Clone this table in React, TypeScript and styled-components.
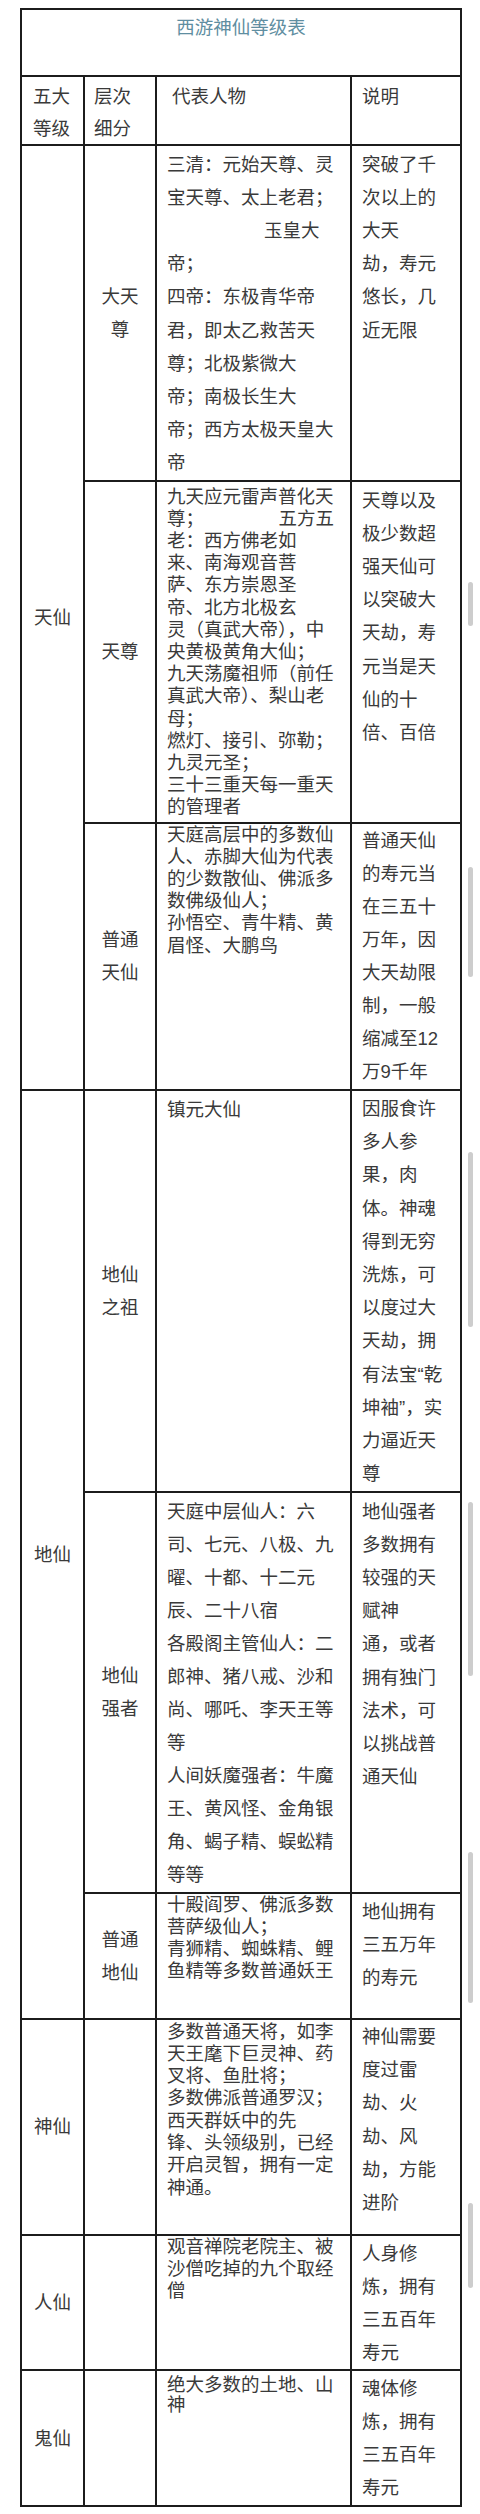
import React from "react";
import styled, { createGlobalStyle } from "styled-components";

const Global = createGlobalStyle`
  html, body { margin: 0; padding: 0; background: #ffffff; }
  body {
    font-family: "Liberation Sans", "Noto Sans CJK SC", sans-serif;
    color: #3a3a3a;
  }
`;

const Page = styled.div`
  position: relative;
  width: 480px;
  height: 2514px;
  padding-top: 8px;
  box-sizing: border-box;
  overflow: hidden;
`;

const Table = styled.table`
  margin-left: 20px;
  width: 440px;
  border-collapse: collapse;
  table-layout: fixed;
  font-size: 18.5px;
`;

const Row = styled.tr<{ $h: number }>`
  height: ${(p) => p.$h}px;
`;

const BaseCell = styled.td`
  border: 2px solid #1c1c1c;
  padding: 0;
  white-space: nowrap;
  vertical-align: top;
  overflow: hidden;
`;

const TitleCell = styled(BaseCell)`
  text-align: center;
  color: #5f8ea1;
  line-height: 33px;
  padding-top: 1px;
`;

const HeadCell = styled(BaseCell)<{ $pl: number }>`
  line-height: 31.5px;
  padding: 4px 0 0 ${(p) => p.$pl}px;
`;

const CenterCell = styled(BaseCell)`
  vertical-align: middle;
  text-align: center;
  line-height: 33px;
`;

const FigureCell = styled(BaseCell)<{ $lh: number; $pt: number }>`
  padding: ${(p) => p.$pt}px 16px 0 10px;
  line-height: ${(p) => p.$lh}px;
`;

const NoteCell = styled(BaseCell)<{ $lh: number; $pt: number }>`
  padding: ${(p) => p.$pt}px 0 0 10px;
  line-height: ${(p) => p.$lh}px;
`;

const Line = styled.div<{ $indent?: number }>`
  padding-left: ${(p) => p.$indent ?? 0}px;
`;

const SplitLine = styled.div`
  display: flex;
  justify-content: space-between;
`;

const Thumb = styled.div<{ $top: number; $h: number }>`
  position: absolute;
  left: 468px;
  width: 5px;
  border-radius: 3px;
  background: #cdcdcd;
  top: ${(p) => p.$top}px;
  height: ${(p) => p.$h}px;
`;

const BottomRule = styled.div`
  margin-top: 8px;
  height: 2px;
  background: #ababab;
`;

type Fig = string | { text: string; indent: number } | { left: string; right: string };

interface Tier {
  h: number;
  level: string[];
  figures: Fig[];
  figLh: number;
  figPt: number;
  notes: string[];
  noteLh: number;
  notePt: number;
}

interface Group {
  name: string;
  tiers: Tier[];
}

const groups: Group[] = [
  {
    name: "天仙",
    tiers: [
      {
        h: 335,
        level: ["大天", "尊"],
        figures: [
          "三清：元始天尊、灵",
          "宝天尊、太上老君；",
          { text: "玉皇大", indent: 97 },
          "帝；",
          "四帝：东极青华帝",
          "君，即太乙救苦天",
          "尊；北极紫微大",
          "帝；南极长生大",
          "帝；西方太极天皇大",
          "帝",
        ],
        figLh: 33.2,
        figPt: 1.5,
        notes: ["突破了千", "次以上的", "大天", "劫，寿元", "悠长，几", "近无限"],
        noteLh: 33.2,
        notePt: 1.5,
      },
      {
        h: 342,
        level: ["天尊"],
        figures: [
          "九天应元雷声普化天",
          { left: "尊；", right: "五方五" },
          "老：西方佛老如",
          "来、南海观音菩",
          "萨、东方崇恩圣",
          "帝、北方北极玄",
          "灵（真武大帝），中",
          "央黄极黄角大仙；",
          "九天荡魔祖师（前任",
          "真武大帝）、梨山老",
          "母；",
          "燃灯、接引、弥勒；",
          "九灵元圣；",
          "三十三重天每一重天",
          "的管理者",
        ],
        figLh: 22.2,
        figPt: 4,
        notes: ["天尊以及", "极少数超", "强天仙可", "以突破大", "天劫，寿", "元当是天", "仙的十", "倍、百倍"],
        noteLh: 33.2,
        notePt: 2,
      },
      {
        h: 267,
        level: ["普通", "天仙"],
        figures: [
          "天庭高层中的多数仙",
          "人、赤脚大仙为代表",
          "的少数散仙、佛派多",
          "数佛级仙人；",
          "孙悟空、青牛精、黄",
          "眉怪、大鹏鸟",
        ],
        figLh: 22.2,
        figPt: 0,
        notes: ["普通天仙", "的寿元当", "在三五十", "万年，因", "大天劫限", "制，一般", "缩减至12", "万9千年"],
        noteLh: 33,
        notePt: 0,
      },
    ],
  },
  {
    name: "地仙",
    tiers: [
      {
        h: 402,
        level: ["地仙", "之祖"],
        figures: ["镇元大仙"],
        figLh: 33.2,
        figPt: 2,
        notes: [
          "因服食许",
          "多人参",
          "果，肉",
          "体。神魂",
          "得到无穷",
          "洗炼，可",
          "以度过大",
          "天劫，拥",
          "有法宝“乾",
          "坤袖”，实",
          "力逼近天",
          "尊",
        ],
        noteLh: 33.2,
        notePt: 1.5,
      },
      {
        h: 401,
        level: ["地仙", "强者"],
        figures: [
          "天庭中层仙人：六",
          "司、七元、八极、九",
          "曜、十都、十二元",
          "辰、二十八宿",
          "各殿阁主管仙人：二",
          "郎神、猪八戒、沙和",
          "尚、哪吒、李天王等",
          "等",
          "人间妖魔强者：牛魔",
          "王、黄风怪、金角银",
          "角、蝎子精、蜈蚣精",
          "等等",
        ],
        figLh: 33,
        figPt: 2,
        notes: ["地仙强者", "多数拥有", "较强的天", "赋神", "通，或者", "拥有独门", "法术，可", "以挑战普", "通天仙"],
        noteLh: 33.2,
        notePt: 2,
      },
      {
        h: 126,
        level: ["普通", "地仙"],
        figures: ["十殿阎罗、佛派多数", "菩萨级仙人；", "青狮精、蜘蛛精、鲤", "鱼精等多数普通妖王"],
        figLh: 22.3,
        figPt: 0,
        notes: ["地仙拥有", "三五万年", "的寿元"],
        noteLh: 33.2,
        notePt: 1.5,
      },
    ],
  },
  {
    name: "神仙",
    tiers: [
      {
        h: 216,
        level: [],
        figures: [
          "多数普通天将，如李",
          "天王麾下巨灵神、药",
          "叉将、鱼肚将；",
          "多数佛派普通罗汉；",
          "西天群妖中的先",
          "锋、头领级别，已经",
          "开启灵智，拥有一定",
          "神通。",
        ],
        figLh: 22.3,
        figPt: 1,
        notes: ["神仙需要", "度过雷", "劫、火", "劫、风", "劫，方能", "进阶"],
        noteLh: 33.2,
        notePt: 0.5,
      },
    ],
  },
  {
    name: "人仙",
    tiers: [
      {
        h: 134,
        level: [],
        figures: ["观音禅院老院主、被", "沙僧吃掉的九个取经", "僧"],
        figLh: 22.4,
        figPt: 0,
        notes: ["人身修", "炼，拥有", "三五百年", "寿元"],
        noteLh: 33.2,
        notePt: 1,
      },
    ],
  },
  {
    name: "鬼仙",
    tiers: [
      {
        h: 135,
        level: [],
        figures: ["绝大多数的土地、山", "神"],
        figLh: 20,
        figPt: 3.5,
        notes: ["魂体修", "炼，拥有", "三五百年", "寿元"],
        noteLh: 33.2,
        notePt: 0.5,
      },
    ],
  },
];

const thumbs = [
  { top: 582, h: 44 },
  { top: 867, h: 110 },
  { top: 1152, h: 175 },
  { top: 1502, h: 174 },
  { top: 1852, h: 151 },
  { top: 2203, h: 85 },
];

function renderFig(f: Fig, i: number) {
  if (typeof f === "string") return <Line key={i}>{f}</Line>;
  if ("left" in f)
    return (
      <SplitLine key={i}>
        <span>{f.left}</span>
        <span>{f.right}</span>
      </SplitLine>
    );
  return (
    <Line key={i} $indent={f.indent}>
      {f.text}
    </Line>
  );
}

export default function App() {
  return (
    <Page>
      <Global />
      <Table>
        <colgroup>
          <col style={{ width: 63 }} />
          <col style={{ width: 72 }} />
          <col style={{ width: 195 }} />
          <col style={{ width: 110 }} />
        </colgroup>
        <tbody>
          <Row $h={67}>
            <TitleCell colSpan={4}>西游神仙等级表</TitleCell>
          </Row>
          <Row $h={68}>
            <HeadCell $pl={11}>
              <Line>五大</Line>
              <Line>等级</Line>
            </HeadCell>
            <HeadCell $pl={9}>
              <Line>层次</Line>
              <Line>细分</Line>
            </HeadCell>
            <HeadCell $pl={15}>代表人物</HeadCell>
            <HeadCell $pl={10}>说明</HeadCell>
          </Row>
          {groups.map((g) =>
            g.tiers.map((t, ti) => (
              <Row $h={t.h} key={g.name + ti}>
                {ti === 0 && <CenterCell rowSpan={g.tiers.length}>{g.name}</CenterCell>}
                <CenterCell>
                  {t.level.map((l) => (
                    <Line key={l}>{l}</Line>
                  ))}
                </CenterCell>
                <FigureCell $lh={t.figLh} $pt={t.figPt}>
                  {t.figures.map(renderFig)}
                </FigureCell>
                <NoteCell $lh={t.noteLh} $pt={t.notePt}>
                  {t.notes.map((n, i) => (
                    <Line key={i}>{n}</Line>
                  ))}
                </NoteCell>
              </Row>
            ))
          )}
        </tbody>
      </Table>
      <BottomRule />
      {thumbs.map((t) => (
        <Thumb key={t.top} $top={t.top} $h={t.h} />
      ))}
    </Page>
  );
}
